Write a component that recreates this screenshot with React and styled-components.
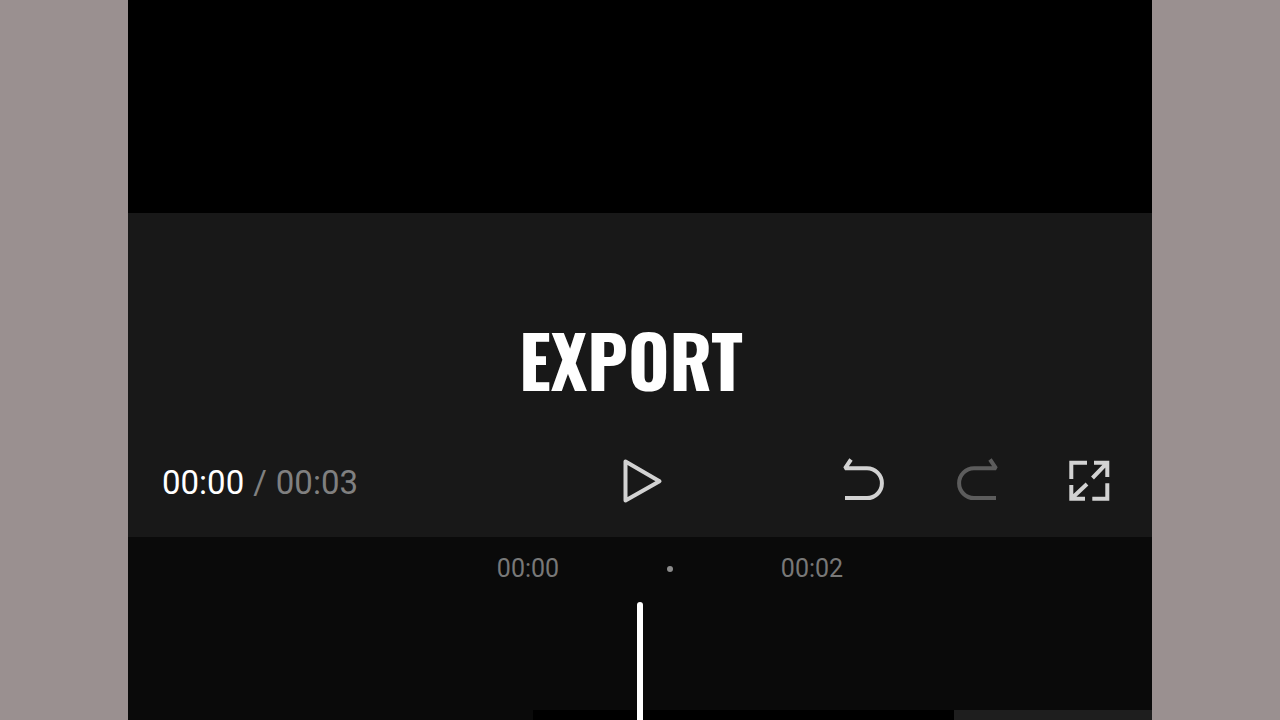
import React from 'react';
import styled, { createGlobalStyle } from 'styled-components';

const GlobalStyle = createGlobalStyle`
    * {
    box-sizing: border-box;
    }
    body {
    margin: 0;
    background-color: #9a9090;
    font-family: Roboto, "Liberation Sans", sans-serif;
    }
`

const Editor = styled.main`
    display: flex;
    flex-direction: column;
    min-height: 100vh;
    margin: 0 10%;
    background-color: #0a0a0a;
`

const Preview = styled.div`
    flex: none;
    height: 213px;
    background-color: #000000;
`

const Panel = styled.section`
    flex: none;
    background-color: #181818;
    padding-top: 106px;
`

const Title = styled.h1`
    margin: 0;
    padding-right: 18px;
    font-family: Oswald, "Roboto Condensed", Roboto, sans-serif;
    font-size: 71px;
    font-weight: 700;
    line-height: 80px;
    text-align: center;
    color: #ffffff;
`

const Controls = styled.div`
    display: grid;
    grid-template-columns: 1fr auto 1fr;
    align-items: center;
    padding: 54px 34px 28px;
`

const Time = styled.div`
    display: flex;
    gap: 9px;
    padding-top: 4px;
    font-size: 33px;
    line-height: 40px;
    color: #808080;
    white-space: nowrap;
    > .time__current {
    color: #ffffff;
    }
`

const Actions = styled.div`
    display: flex;
    justify-content: flex-end;
    gap: 57px;
`

const IconButton = styled.button`
    display: block;
    width: 56px;
    height: 56px;
    padding: 0;
    border: 0;
    background: none;
    color: ${props => props.disabled ? '#5c5c5c' : '#d2d2d2'};
    > svg {
    display: block;
    fill: none;
    stroke: currentColor;
    stroke-width: 4;
    }
`

const Timeline = styled.section`
    position: relative;
    flex: 1;
    display: flex;
    flex-direction: column;
    justify-content: space-between;
    min-height: 183px;
`

const Ruler = styled.div`
    display: flex;
    justify-content: center;
    align-items: center;
    padding: 16px 0 0 60px;
    font-size: 25px;
    line-height: 31px;
    color: #787878;
`

const Mark = styled.span`
    display: flex;
    justify-content: center;
    width: 142px;
`

const Dot = styled.i`
    width: 6px;
    height: 6px;
    border-radius: 50%;
    background-color: #8c8c8c;
`

const Playhead = styled.div`
    position: absolute;
    top: 65px;
    bottom: 0;
    left: 50%;
    width: 6px;
    margin-left: -3px;
    border-radius: 3px 3px 0 0;
    background-color: #ffffff;
`

const Track = styled.div`
    display: flex;
    height: 10px;
    padding-left: calc(50% - 107px);
`

const Clip = styled.div`
    width: 421px;
    background-color: #000000;
`

const Ending = styled.div`
    flex: 1;
    background-color: #1e1e1e;
`

const PlayIcon = () => (
    <svg width="56" height="56" viewBox="0 0 56 56" strokeLinejoin="round">
        <path d="M13.5 8.5V47.5L47.5 28.2Z" />
    </svg>
)

const UndoIcon = () => (
    <svg width="56" height="56" viewBox="0 0 56 56" strokeLinejoin="bevel">
        <path d="M15 6.5L9 15.3H31a14.9 14.9 0 0 1 0 29.8H9" />
    </svg>
)

const RedoIcon = () => (
    <svg width="56" height="56" viewBox="0 0 56 56" strokeLinejoin="bevel">
        <path d="M41 6.5L47 15.3H25a14.9 14.9 0 0 0 0 29.8H47" />
    </svg>
)

const FullscreenIcon = () => (
    <svg width="56" height="56" viewBox="0 0 56 56">
        <path d="M25 9.7H9.3V26M30.3 45.7H45.3V30.3" />
        <path d="M32 9.7H45.3V24M45.3 9.7L30.5 25" />
        <path d="M9.3 32V45.7H23M9.3 45.7L25 31" />
    </svg>
)

export const Player = () => (
    <Panel>
        <Title>EXPORT</Title>
        <Controls>
            <Time>
                <span className="time__current">00:00</span>
                <span>/</span>
                <span>00:03</span>
            </Time>
            <IconButton type="button" aria-label="Play"><PlayIcon /></IconButton>
            <Actions>
                <IconButton type="button" aria-label="Undo"><UndoIcon /></IconButton>
                <IconButton type="button" aria-label="Redo" disabled><RedoIcon /></IconButton>
                <IconButton type="button" aria-label="Full screen"><FullscreenIcon /></IconButton>
            </Actions>
        </Controls>
    </Panel>
)

const App = () => (
    <>
        <GlobalStyle />
        <Editor>
            <Preview />
            <Player />
            <Timeline>
                <Ruler>
                    <Mark>00:00</Mark>
                    <Mark><Dot /></Mark>
                    <Mark>00:02</Mark>
                </Ruler>
                <Track>
                    <Clip />
                    <Ending />
                </Track>
                <Playhead />
            </Timeline>
        </Editor>
    </>
)

export default App;
